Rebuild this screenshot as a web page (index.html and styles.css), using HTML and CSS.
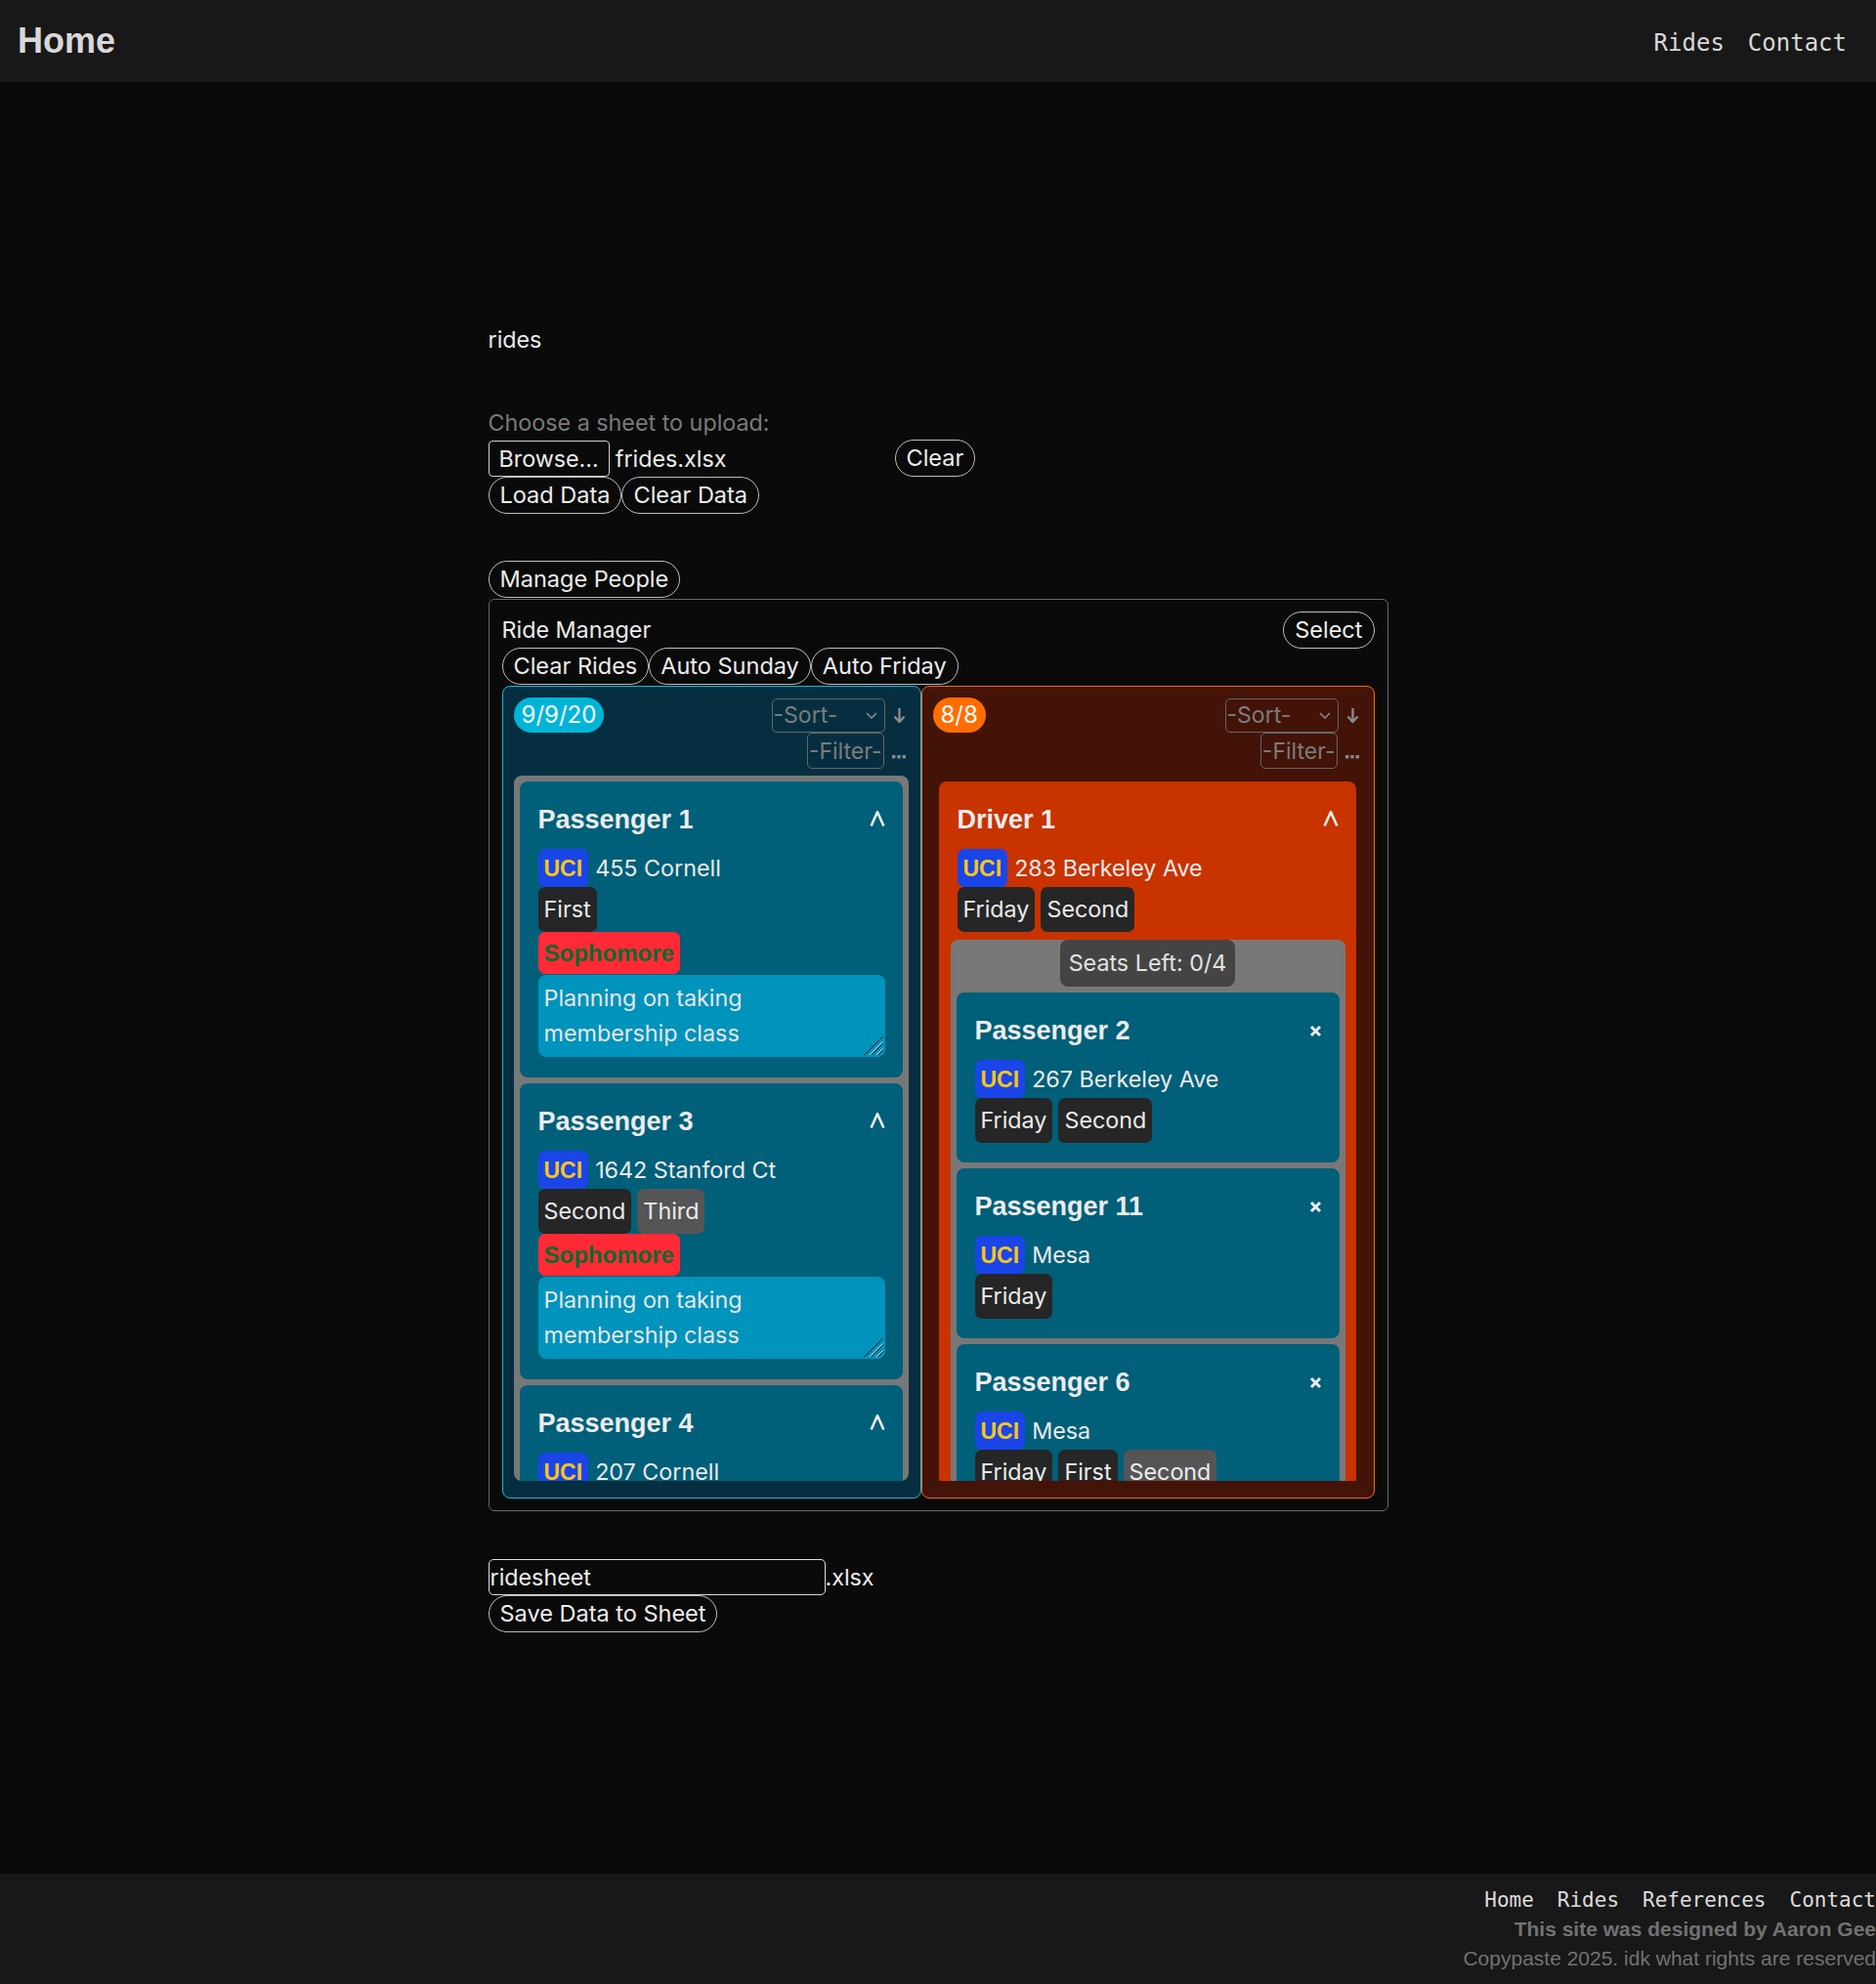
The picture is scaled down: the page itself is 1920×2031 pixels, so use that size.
FILE: index.html
```html
<!DOCTYPE html>
<html lang="en">
<head>
<meta charset="utf-8">
<title>Rides</title>
<link rel="stylesheet" href="styles.css">
</head>
<body>
<header class="topbar">
  <a class="brand" href="#">Home</a>
  <nav class="topnav"><a href="#">Rides</a><a href="#">Contact</a></nav>
</header>

<main class="page">
  <p class="page-title">rides</p>
  <p class="upload-label">Choose a sheet to upload:</p>
  <div class="file-row">
    <div class="file-input"><span class="browse">Browse…</span><span class="file-name">frides.xlsx</span></div>
    <button class="btn">Clear</button>
  </div>
  <div class="btn-row"><button class="btn">Load Data</button><button class="btn">Clear Data</button></div>

  <button class="btn manage-btn">Manage People</button>

  <section class="manager">
    <div class="manager-head"><span>Ride Manager</span><button class="btn">Select</button></div>
    <div class="btn-row"><button class="btn">Clear Rides</button><button class="btn">Auto Sunday</button><button class="btn">Auto Friday</button></div>

    <div class="columns">
      <div class="col col-pass">
        <div class="col-row">
          <span class="count count-pass">9/9/20</span>
          <div class="ctrl">
            <span class="select">-Sort-<svg class="sel-chev" width="12" height="7" viewBox="0 0 12 7"><path d="M1 1L6 6L11 1" fill="none" stroke="#8a8a8a" stroke-width="1.5"/></svg></span>
            <svg class="arrow" width="13" height="16" viewBox="0 0 13 16"><path d="M6.5 1V15M1.5 9.5L6.5 15L11.5 9.5" fill="none" stroke="#8a8a8a" stroke-width="2.4"/></svg>
          </div>
        </div>
        <div class="col-row col-row-end">
          <div class="ctrl">
            <span class="select filter">-Filter-</span>
            <svg class="dots" width="14" height="4" viewBox="0 0 14 4"><rect x="0" y="0" width="3.4" height="3.4" fill="#8a8a8a"/><rect x="5.3" y="0" width="3.4" height="3.4" fill="#8a8a8a"/><rect x="10.6" y="0" width="3.4" height="3.4" fill="#8a8a8a"/></svg>
          </div>
        </div>
        <div class="list list-pass">
          <article class="card">
            <div class="card-title"><span>Passenger 1</span><svg class="chev" width="16" height="16" viewBox="0 0 16 16"><path d="M1.6 15.5L8 1.2L14.4 15.5" fill="none" stroke="#ececec" stroke-width="2.6"/></svg></div>
            <div class="loc"><span class="uci">UCI</span><span>455 Cornell</span></div>
            <div class="tags"><span class="tag">First</span></div>
            <span class="year">Sophomore</span>
            <div class="note">Planning on taking membership class<span class="grip"></span></div>
          </article>
          <article class="card">
            <div class="card-title"><span>Passenger 3</span><svg class="chev" width="16" height="16" viewBox="0 0 16 16"><path d="M1.6 15.5L8 1.2L14.4 15.5" fill="none" stroke="#ececec" stroke-width="2.6"/></svg></div>
            <div class="loc"><span class="uci">UCI</span><span>1642 Stanford Ct</span></div>
            <div class="tags"><span class="tag">Second</span><span class="tag tag-alt">Third</span></div>
            <span class="year">Sophomore</span>
            <div class="note">Planning on taking membership class<span class="grip"></span></div>
          </article>
          <article class="card">
            <div class="card-title"><span>Passenger 4</span><svg class="chev" width="16" height="16" viewBox="0 0 16 16"><path d="M1.6 15.5L8 1.2L14.4 15.5" fill="none" stroke="#ececec" stroke-width="2.6"/></svg></div>
            <div class="loc"><span class="uci">UCI</span><span>207 Cornell</span></div>
            <div class="tags"><span class="tag">First</span></div>
          </article>
        </div>
      </div>

      <div class="col col-drive">
        <div class="col-row">
          <span class="count count-drive">8/8</span>
          <div class="ctrl">
            <span class="select">-Sort-<svg class="sel-chev" width="12" height="7" viewBox="0 0 12 7"><path d="M1 1L6 6L11 1" fill="none" stroke="#8a8a8a" stroke-width="1.5"/></svg></span>
            <svg class="arrow" width="13" height="16" viewBox="0 0 13 16"><path d="M6.5 1V15M1.5 9.5L6.5 15L11.5 9.5" fill="none" stroke="#8a8a8a" stroke-width="2.4"/></svg>
          </div>
        </div>
        <div class="col-row col-row-end">
          <div class="ctrl">
            <span class="select filter">-Filter-</span>
            <svg class="dots" width="14" height="4" viewBox="0 0 14 4"><rect x="0" y="0" width="3.4" height="3.4" fill="#8a8a8a"/><rect x="5.3" y="0" width="3.4" height="3.4" fill="#8a8a8a"/><rect x="10.6" y="0" width="3.4" height="3.4" fill="#8a8a8a"/></svg>
          </div>
        </div>
        <div class="list list-drive">
          <article class="card card-driver">
            <div class="card-title"><span>Driver 1</span><svg class="chev" width="16" height="16" viewBox="0 0 16 16"><path d="M1.6 15.5L8 1.2L14.4 15.5" fill="none" stroke="#ececec" stroke-width="2.6"/></svg></div>
            <div class="loc"><span class="uci">UCI</span><span>283 Berkeley Ave</span></div>
            <div class="tags"><span class="tag">Friday</span><span class="tag">Second</span></div>
            <div class="seats">
              <span class="seats-left">Seats Left: 0/4</span>
              <article class="card card-rider">
                <div class="card-title"><span>Passenger 2</span><svg class="close" width="13" height="13" viewBox="0 0 13 13"><path d="M2 2L11 11M11 2L2 11" stroke="#ececec" stroke-width="3"/></svg></div>
                <div class="loc"><span class="uci">UCI</span><span>267 Berkeley Ave</span></div>
                <div class="tags"><span class="tag">Friday</span><span class="tag">Second</span></div>
              </article>
              <article class="card card-rider">
                <div class="card-title"><span>Passenger 11</span><svg class="close" width="13" height="13" viewBox="0 0 13 13"><path d="M2 2L11 11M11 2L2 11" stroke="#ececec" stroke-width="3"/></svg></div>
                <div class="loc"><span class="uci">UCI</span><span>Mesa</span></div>
                <div class="tags"><span class="tag">Friday</span></div>
              </article>
              <article class="card card-rider">
                <div class="card-title"><span>Passenger 6</span><svg class="close" width="13" height="13" viewBox="0 0 13 13"><path d="M2 2L11 11M11 2L2 11" stroke="#ececec" stroke-width="3"/></svg></div>
                <div class="loc"><span class="uci">UCI</span><span>Mesa</span></div>
                <div class="tags"><span class="tag">Friday</span><span class="tag">First</span><span class="tag tag-alt">Second</span></div>
              </article>
            </div>
          </article>
        </div>
      </div>
    </div>
  </section>

  <div class="save-row"><input class="sheet-name" type="text" value="ridesheet"><span>.xlsx</span></div>
  <button class="btn">Save Data to Sheet</button>
</main>

<footer class="footer">
  <nav class="footnav"><a href="#">Home</a><a href="#">Rides</a><a href="#">References</a><a href="#">Contact</a></nav>
  <p class="credit">This site was designed by Aaron Gee</p>
  <p class="copy">Copypaste 2025. idk what rights are reserved</p>
</footer>
</body>
</html>
```

FILE: styles.css
```css
* { box-sizing: border-box; }

html, body { margin: 0; padding: 0; }

body {
  background: #0a0a0a;
  color: #ebebeb;
  font-family: Inter, "Liberation Sans", sans-serif;
  font-size: 23.3px;
  min-height: 100vh;
  display: flex;
  flex-direction: column;
}

a { color: inherit; text-decoration: none; }

/* ---------- header ---------- */
.topbar {
  height: 84px;
  background: #181818;
  display: flex;
  align-items: center;
  justify-content: space-between;
  padding: 0 30px 0 18px;
}
.brand {
  font-family: "Liberation Sans", Arial, sans-serif;
  font-weight: bold;
  font-size: 36px;
  color: #d8d8d8;
}
.topnav {
  display: flex;
  gap: 24px;
  padding-top: 3px;
}
.topnav a {
  font-family: "DejaVu Sans Mono", monospace;
  font-size: 24px;
  color: #d8d8d8;
}

/* ---------- main ---------- */
.page {
  flex: 1;
  width: 921px;
  margin: 0 auto;
  padding-top: 250px;
}
.page p { margin: 0; }
.page-title { line-height: 28px; }
.upload-label {
  margin-top: 57px !important;
  line-height: 28px;
  color: #7a7a7a;
}

.btn {
  font-family: inherit;
  font-size: 23.5px;
  color: #ededed;
  background: transparent;
  border: 1px solid #bdbdbd;
  border-radius: 19px;
  height: 38px;
  padding: 0 11px;
  line-height: 1;
  white-space: nowrap;
  cursor: pointer;
}

.file-row {
  margin-top: 3px;
  display: flex;
  align-items: center;
  height: 38px;
}
.file-input {
  width: 416px;
  display: flex;
  align-items: center;
  gap: 6px;
}
.browse {
  height: 37px;
  border: 1px solid #cfcfcf;
  border-radius: 4px;
  padding: 0 10px;
  display: flex;
  align-items: center;
}
.btn-row { display: flex; }

.manage-btn { margin-top: 48px; display: block; }

/* ---------- ride manager ---------- */
.manager {
  margin-top: 1px;
  border: 1px solid #666;
  border-radius: 6px;
  padding: 12px 13px 12px 13px;
}
.manager-head {
  display: flex;
  justify-content: space-between;
  align-items: center;
  height: 37px;
}
.columns {
  display: flex;
  margin-top: 1px;
}
.col {
  border: 1px solid;
  border-radius: 8px;
  padding: 11px 12px 17px 11px;
}
.col-pass {
  flex: 0 0 429px;
  background: #052f40;
  border-color: #17b6dc;
}
.col-drive {
  flex: 1;
  background: #431307;
  border-color: #f26a0c;
}
.col-row {
  display: flex;
  justify-content: space-between;
  align-items: center;
  height: 36px;
  padding-right: 3px;
}
.col-row-end { justify-content: flex-end; height: 37px; }

.count {
  height: 36px;
  line-height: 36px;
  padding: 0 8px;
  border-radius: 18px;
  color: #fff;
  font-size: 24px;
}
.count-pass { background: #00b4d8; }
.count-drive { background: #ff6d00; }

.ctrl { display: flex; align-items: center; gap: 8px; }
.select {
  width: 116px;
  height: 35px;
  border: 1px solid #666;
  border-radius: 5px;
  color: #7c7c7c;
  font-size: 23px;
  white-space: nowrap;
  display: flex;
  align-items: center;
  justify-content: space-between;
  padding: 0 7px 0 1px;
}
.filter { width: auto; height: 37px; padding: 0 1px; }
.dots { margin-top: 12px; }

.list {
  margin-top: 7px;
  height: 722px;
  overflow: hidden;
  padding: 6px;
  border-radius: 8px;
  display: flex;
  flex-direction: column;
  gap: 6px;
}
.list-pass { background: #787878; }

/* ---------- cards ---------- */
.card {
  flex-shrink: 0;
  background: #005f79;
  border-radius: 8px;
  padding: 21px 18px 21px 19px;
  display: flex;
  flex-direction: column;
  align-items: flex-start;
}
.card-driver { background: #c83300; padding-bottom: 0; }
.card-title {
  align-self: stretch;
  display: flex;
  justify-content: space-between;
  align-items: center;
  font-family: "Liberation Sans", Arial, sans-serif;
  font-weight: bold;
  font-size: 27px;
  line-height: 36px;
  color: #ececec;
}
.chev { margin-top: -2px; }

.loc {
  margin-top: 12px;
  height: 39px;
  display: flex;
  align-items: center;
  gap: 7px;
  white-space: nowrap;
}
.uci {
  background: #1a45e8;
  color: #f6c619;
  font-family: "Liberation Sans", Arial, sans-serif;
  font-weight: bold;
  font-size: 23px;
  height: 39px;
  line-height: 40px;
  padding: 0 6px;
  border-radius: 7px;
}
.tags { display: flex; gap: 6px; white-space: nowrap; }
.tag {
  background: #262626;
  height: 46px;
  line-height: 46px;
  padding: 0 6px;
  border-radius: 7px;
}
.tag-alt { background: #555; }
.year {
  background: #ff2a36;
  color: #0b6a2e;
  font-family: "Liberation Sans", Arial, sans-serif;
  font-weight: bold;
  font-size: 24px;
  height: 43px;
  line-height: 43px;
  padding: 0 6px;
  border-radius: 7px;
}
.note {
  position: relative;
  align-self: stretch;
  margin-top: 1px;
  height: 84px;
  background: #0093bb;
  border-radius: 8px;
  padding: 6px 100px 6px 6px;
  line-height: 36px;
  color: #e6e6e6;
}
.grip {
  position: absolute;
  right: 2px;
  bottom: 2px;
  width: 20px;
  height: 20px;
  background: repeating-linear-gradient(135deg, transparent 0 3px, #cfe3ea 3px 4px, #0a4f63 4px 5px);
  clip-path: polygon(100% 0, 100% 100%, 0 100%);
}

.seats {
  align-self: stretch;
  margin: 8px -7px 0;
  background: #787878;
  border-radius: 8px;
  padding: 0 6px 6px;
  display: flex;
  flex-direction: column;
  align-items: center;
  gap: 6px;
}
.seats-left {
  background: #444;
  color: #e2e2e2;
  height: 48px;
  line-height: 48px;
  padding: 0 9px;
  border-radius: 8px;
}
.card-rider { align-self: stretch; padding-bottom: 20px; }

/* ---------- save ---------- */
.save-row {
  margin-top: 49px;
  display: flex;
  align-items: center;
}
.sheet-name {
  width: 345px;
  height: 37px;
  background: transparent;
  border: 1px solid #dcdcdc;
  border-radius: 5px;
  color: #ededed;
  font-family: inherit;
  font-size: 23.3px;
  padding: 0 1px;
}

/* ---------- footer ---------- */
.footer {
  background: #181818;
  height: 113px;
  padding-top: 12px;
  text-align: right;
}
.footnav {
  display: flex;
  justify-content: flex-end;
  gap: 24px;
  height: 30px;
  line-height: 30px;
}
.footnav a {
  font-family: "DejaVu Sans Mono", monospace;
  font-size: 21px;
  color: #dcdcdc;
}
.footer p {
  margin: 0;
  line-height: 30px;
  font-family: "Liberation Sans", Arial, sans-serif;
  font-size: 21px;
  color: #727272;
}
.credit { font-weight: bold; }
```
